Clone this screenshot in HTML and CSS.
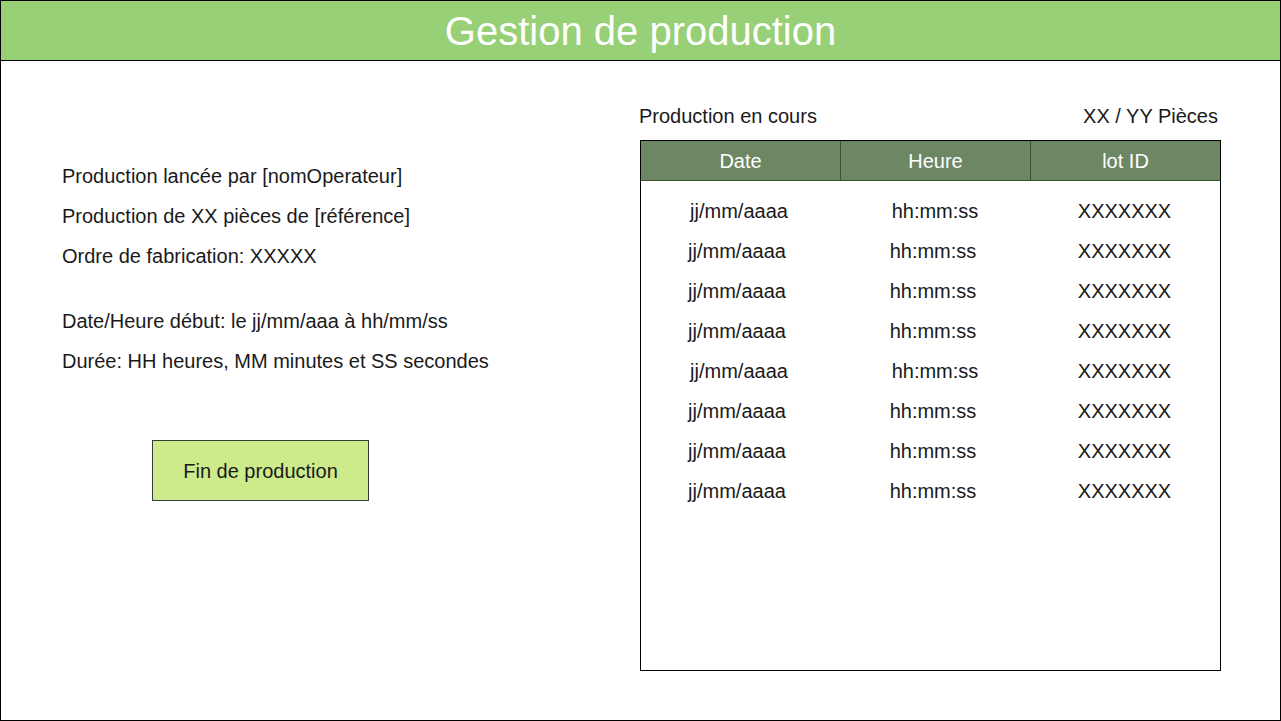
FILE: index.html
```html
<!DOCTYPE html>
<html lang="fr">
<head>
<meta charset="utf-8">
<title>Gestion de production</title>
<link rel="stylesheet" href="styles.css">
</head>
<body>
<div class="frame">
  <header class="topbar">Gestion de production</header>
  <main class="main">
    <section class="left">
      <div class="info">
        <div class="line">Production lancée par [nomOperateur]</div>
        <div class="line">Production de XX pièces de [référence]</div>
        <div class="line">Ordre de fabrication: XXXXX</div>
      </div>
      <div class="info timing">
        <div class="line">Date/Heure début: le jj/mm/aaa à hh/mm/ss</div>
        <div class="line">Durée: HH heures, MM minutes et SS secondes</div>
      </div>
      <button class="btn">Fin de production</button>
    </section>
    <section class="right">
      <div class="caption">
        <span>Production en cours</span>
        <span>XX / YY Pièces</span>
      </div>
      <div class="table">
        <div class="thead">
          <div class="th">Date</div>
          <div class="th">Heure</div>
          <div class="th">lot ID</div>
        </div>
        <div class="tbody">
          <div class="tr shift"><span>jj/mm/aaaa</span><span>hh:mm:ss</span><span>XXXXXXX</span></div>
          <div class="tr"><span>jj/mm/aaaa</span><span>hh:mm:ss</span><span>XXXXXXX</span></div>
          <div class="tr"><span>jj/mm/aaaa</span><span>hh:mm:ss</span><span>XXXXXXX</span></div>
          <div class="tr"><span>jj/mm/aaaa</span><span>hh:mm:ss</span><span>XXXXXXX</span></div>
          <div class="tr shift"><span>jj/mm/aaaa</span><span>hh:mm:ss</span><span>XXXXXXX</span></div>
          <div class="tr"><span>jj/mm/aaaa</span><span>hh:mm:ss</span><span>XXXXXXX</span></div>
          <div class="tr"><span>jj/mm/aaaa</span><span>hh:mm:ss</span><span>XXXXXXX</span></div>
          <div class="tr"><span>jj/mm/aaaa</span><span>hh:mm:ss</span><span>XXXXXXX</span></div>
        </div>
      </div>
    </section>
  </main>
</div>
</body>
</html>
```
FILE: styles.css
```css
* { box-sizing: border-box; }
html, body { margin: 0; padding: 0; background: #fff; }
body {
  font-family: "Liberation Sans", Arial, sans-serif;
  font-size: 20px;
  color: #1a1a1a;
}
.frame {
  width: 1281px;
  height: 721px;
  border: 1px solid #000;
  display: flex;
  flex-direction: column;
  overflow: hidden;
}
.topbar {
  height: 60px;
  flex: none;
  background: #97d077;
  border-bottom: 1px solid #000;
  color: #fff;
  font-size: 40px;
  line-height: 61px;
  text-align: center;
}
.main {
  flex: 1;
  display: flex;
}
.left {
  width: 639px;
  flex: none;
  padding: 95px 0 0 61px;
  display: flex;
  flex-direction: column;
  align-items: flex-start;
}
.line {
  line-height: 40px;
  height: 40px;
  white-space: nowrap;
}
.timing { margin-top: 25px; }
.btn {
  margin: 59px 0 0 90px;
  width: 217px;
  height: 61px;
  background: #cdeb8b;
  border: 1px solid #36393d;
  font-family: inherit;
  font-size: 20px;
  line-height: 58px;
  color: #1a1a1a;
  padding: 1px 0 0 0;
  cursor: pointer;
}
.right {
  width: 581px;
  flex: none;
  padding-top: 43px;
}
.caption {
  display: flex;
  justify-content: space-between;
  line-height: 24px;
  margin-left: -1px;
  padding-right: 3px;
}
.table {
  margin-top: 12px;
  height: 531px;
  border: 1px solid #000;
}
.thead, .tr {
  display: grid;
  grid-template-columns: 200px 190px 189px;
}
.thead {
  height: 40px;
  background: #6d8764;
  border-bottom: 1px solid #3a5431;
  color: #fff;
}
.th {
  text-align: center;
  line-height: 39px;
  padding-top: 1px;
}
.th:not(:last-child) { border-right: 1px solid #3a5431; }
.tbody { padding-top: 10px; }
.tr {
  height: 40px;
  line-height: 40px;
}
.tr span { text-align: center; }
.tr span:nth-child(1) { padding-right: 8px; }
.tr span:nth-child(2) { padding-right: 6px; }
.tr span:nth-child(3) { padding-right: 2px; }
.tr.shift span:nth-child(1) { padding-right: 4px; }
.tr.shift span:nth-child(2) { padding-right: 2px; }
```
